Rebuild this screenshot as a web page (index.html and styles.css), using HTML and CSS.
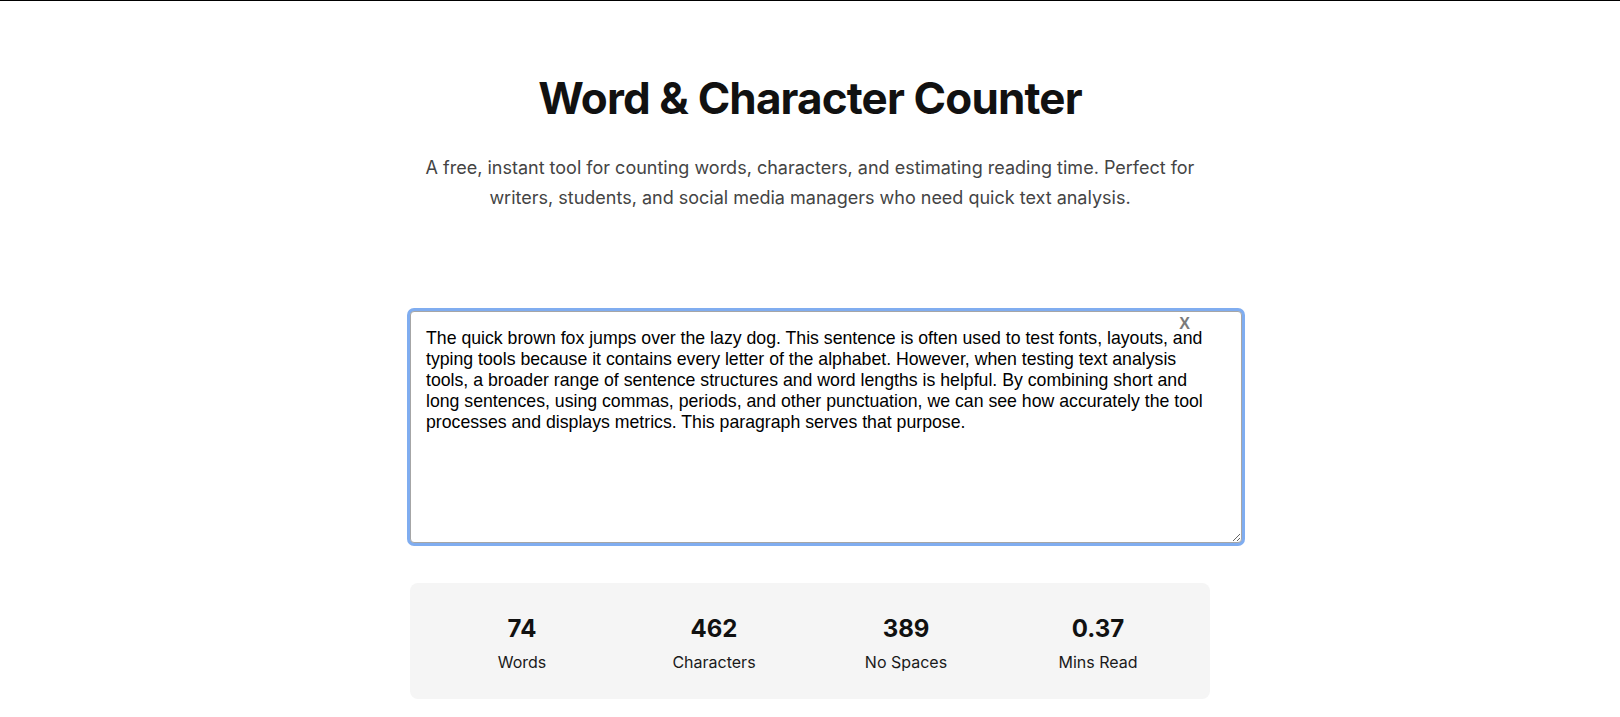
FILE: index.html
```html
<!DOCTYPE html>
<html lang="en">
<head>
<meta charset="utf-8">
<title>Word &amp; Character Counter</title>
<link rel="stylesheet" href="styles.css">
</head>
<body>
<main class="container">
  <header class="header">
    <h1 class="title">Word &amp; Character Counter</h1>
    <p class="intro">A free, instant tool for counting words, characters, and estimating reading time. Perfect for writers, students, and social media managers who need quick text analysis.</p>
  </header>
  <section class="editor">
    <textarea class="input">The quick brown fox jumps over the lazy dog. This sentence is often used to test fonts, layouts, and typing tools because it contains every letter of the alphabet. However, when testing text analysis tools, a broader range of sentence structures and word lengths is helpful. By combining short and long sentences, using commas, periods, and other punctuation, we can see how accurately the tool processes and displays metrics. This paragraph serves that purpose.</textarea>
    <button class="clear" type="button">X</button>
  </section>
  <section class="stats">
    <div class="stat"><div class="num">74</div><div class="label">Words</div></div>
    <div class="stat"><div class="num">462</div><div class="label">Characters</div></div>
    <div class="stat"><div class="num">389</div><div class="label">No Spaces</div></div>
    <div class="stat"><div class="num">0.37</div><div class="label">Mins Read</div></div>
  </section>
</main>
</body>
</html>
```
FILE: styles.css
```css
html, body {
  margin: 0;
  padding: 0;
  background: #fff;
}
body {
  border-top: 1px solid #000;
  font-family: Inter, "Noto Sans", sans-serif;
  color: #111;
}
.container {
  max-width: 800px;
  margin: 0 auto;
}
.header {
  padding-top: 71px;
  text-align: center;
}
.title {
  margin: 0;
  font-size: 44px;
  line-height: 53px;
  font-weight: 700;
  letter-spacing: -0.85px;
  color: #111;
}
.intro {
  margin: 28px 0 0;
  font-size: 18px;
  line-height: 30px;
  color: #444;
}
.editor {
  position: relative;
  margin-top: 98px;
}
.input {
  display: block;
  width: 790px;
  height: 199px;
  padding: 16px 25px 15px 15px;
  margin: 0;
  border: 1px solid #a6a6a6;
  border-radius: 4px;
  box-shadow: 0 0 0 3px #80adf0;
  outline: none;
  font-family: "Liberation Sans", Arial, sans-serif;
  font-size: 17.7px;
  line-height: 21px;
  color: #000;
  background: #fff;
}
.clear {
  position: absolute;
  top: 4px;
  right: 18px;
  border: 0;
  background: transparent;
  padding: 0 2px;
  font-family: "Liberation Sans", Arial, sans-serif;
  font-size: 16px;
  font-weight: 700;
  color: #7a7a7a;
  cursor: pointer;
}
.stats {
  margin-top: 40px;
  display: grid;
  grid-template-columns: repeat(4, 1fr);
  padding: 31px 16px 27px;
  background: #f5f5f5;
  border-radius: 8px;
  text-align: center;
}
.num {
  font-size: 24px;
  line-height: 29px;
  font-weight: 700;
  color: #111;
}
.label {
  margin-top: 10px;
  font-size: 16px;
  line-height: 19px;
  color: #1a1a1a;
}
```
